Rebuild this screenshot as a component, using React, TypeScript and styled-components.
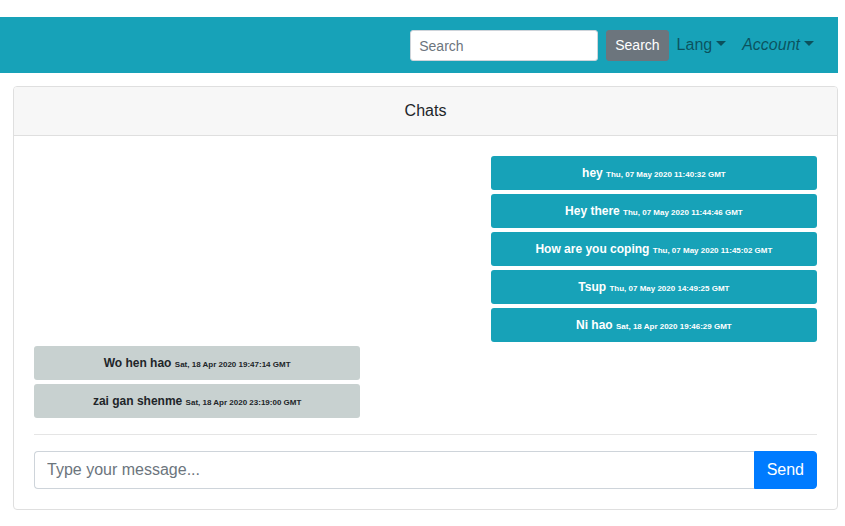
import React from 'react';
import styled, { createGlobalStyle } from 'styled-components';

const GlobalStyle = createGlobalStyle`
  *, *::before, *::after { box-sizing: border-box; }
  body {
    margin: 0;
    background: #fff;
    color: #212529;
    font: 400 16px/24px "Liberation Sans", Arial, sans-serif;
  }
  input, button { margin: 0; font-family: inherit; }
`;

const Page = styled.div`
  padding: 17px 7px 16px 0;
`;

const Navbar = styled.nav`
  display: flex;
  align-items: center;
  justify-content: flex-end;
  padding: 8px 16px;
  background: #17a2b8;
`;

const SearchForm = styled.form`
  display: flex;
  align-items: center;
  gap: 8px;
  padding-top: 1px;
`;

const TextField = styled.input`
  min-width: 0;
  border: 1px solid #ced4da;
  background: #fff;
  color: #495057;
  outline: none;
  &::placeholder { color: #6c757d; opacity: 1; }
`;

const SearchField = styled(TextField)`
  width: 188px;
  height: 31px;
  padding: 4px 8px;
  border-radius: 3px;
  font-size: 14px;
  line-height: 21px;
`;

const Button = styled.button`
  border: 1px solid transparent;
  color: #fff;
  cursor: pointer;
`;

const SearchButton = styled(Button)`
  height: 31px;
  padding: 4px 8px;
  border-color: #6c757d;
  border-radius: 3px;
  background: #6c757d;
  font-size: 14px;
  line-height: 21px;
`;

const NavMenu = styled.div`
  display: flex;
`;

const MenuToggle = styled.button<{ $italic?: boolean }>`
  padding: 8px;
  border: 0;
  background: none;
  color: rgba(0, 0, 0, 0.5);
  font-size: 16px;
  font-style: ${({ $italic }) => ($italic ? 'italic' : 'normal')};
  line-height: 24px;
  cursor: pointer;

  &::after {
    content: "";
    display: inline-block;
    margin-left: 4px;
    vertical-align: 4px;
    border-top: 5px solid;
    border-right: 5px solid transparent;
    border-left: 5px solid transparent;
  }
`;

const Card = styled.main`
  margin: 13px 0 0 13px;
  border: 1px solid #dfdfdf;
  border-radius: 4px;
`;

const CardHeader = styled.header`
  padding: 12px 20px;
  border-bottom: 1px solid #dfdfdf;
  border-radius: 3px 3px 0 0;
  background: #f7f7f7;
  text-align: center;
`;

const CardBody = styled.div`
  padding: 20px;
`;

const Messages = styled.div`
  display: flex;
  flex-direction: column;
  gap: 4px;
`;

const Bubble = styled.div<{ $mine: boolean }>`
  align-self: ${({ $mine }) => ($mine ? 'flex-end' : 'flex-start')};
  width: calc(100% * 5 / 12);
  padding: 8px;
  border-radius: 3px;
  background: ${({ $mine }) => ($mine ? '#17a2b8' : '#c8d1d0')};
  color: ${({ $mine }) => ($mine ? '#fff' : '#212529')};
  font-size: 12px;
  font-weight: 700;
  line-height: 18px;
  text-align: center;
`;

const Timestamp = styled.time`
  font-size: 8px;
  line-height: 12px;
`;

const Divider = styled.hr`
  height: 1px;
  margin: 16px 0;
  border: 0;
  background: #e5e5e5;
`;

const Composer = styled.form`
  display: flex;
`;

const MessageField = styled(TextField)`
  flex: 1;
  height: 38px;
  padding: 6px 12px;
  border-right: 0;
  border-radius: 4px 0 0 4px;
  font-size: 16px;
  line-height: 24px;
`;

const SendButton = styled(Button)`
  height: 38px;
  padding: 6px 12px;
  border-color: #007bff;
  border-radius: 0 4px 4px 0;
  background: #007bff;
  font-size: 16px;
  line-height: 24px;
`;

type Message = { text: string; time: string; mine: boolean };

const messages: Message[] = [
  { text: 'hey', time: 'Thu, 07 May 2020 11:40:32 GMT', mine: true },
  { text: 'Hey there', time: 'Thu, 07 May 2020 11:44:46 GMT', mine: true },
  { text: 'How are you coping', time: 'Thu, 07 May 2020 11:45:02 GMT', mine: true },
  { text: 'Tsup', time: 'Thu, 07 May 2020 14:49:25 GMT', mine: true },
  { text: 'Ni hao', time: 'Sat, 18 Apr 2020 19:46:29 GMT', mine: true },
  { text: 'Wo hen hao', time: 'Sat, 18 Apr 2020 19:47:14 GMT', mine: false },
  { text: 'zai gan shenme', time: 'Sat, 18 Apr 2020 23:19:00 GMT', mine: false },
];

const stopSubmit = (event: React.FormEvent) => event.preventDefault();

export default function App() {
  return (
    <>
      <GlobalStyle />
      <Page>
        <Navbar>
          <SearchForm role="search" onSubmit={stopSubmit}>
            <SearchField type="text" placeholder="Search" aria-label="Search" />
            <SearchButton type="submit">Search</SearchButton>
          </SearchForm>
          <NavMenu>
            <MenuToggle type="button" aria-haspopup="menu">Lang</MenuToggle>
            <MenuToggle type="button" aria-haspopup="menu" $italic>Account</MenuToggle>
          </NavMenu>
        </Navbar>
        <Card>
          <CardHeader>Chats</CardHeader>
          <CardBody>
            <Messages>
              {messages.map(({ text, time, mine }) => (
                <Bubble key={text} $mine={mine}>
                  {text} <Timestamp>{time}</Timestamp>
                </Bubble>
              ))}
            </Messages>
            <Divider />
            <Composer onSubmit={stopSubmit}>
              <MessageField type="text" placeholder="Type your message..." aria-label="Message" />
              <SendButton type="submit">Send</SendButton>
            </Composer>
          </CardBody>
        </Card>
      </Page>
    </>
  );
}
